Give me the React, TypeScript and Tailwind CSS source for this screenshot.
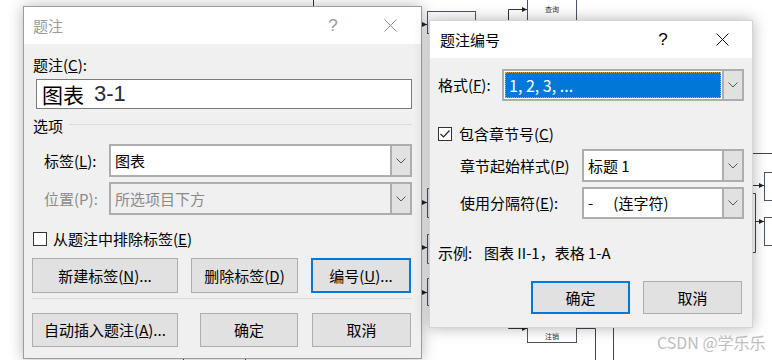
import React from "react";

function Chevron() {
  return (
    <svg width="10" height="6" viewBox="0 0 10 6" className="block">
      <polyline points="0.5,0.5 5,5 9.5,0.5" fill="none" stroke="#555" strokeWidth="1" />
    </svg>
  );
}

function CloseX({ color }: { color: string }) {
  return (
    <svg width="13" height="13" viewBox="0 0 13 13" className="block">
      <line x1="0.5" y1="0.5" x2="12.5" y2="12.5" stroke={color} strokeWidth="1" />
      <line x1="12.5" y1="0.5" x2="0.5" y2="12.5" stroke={color} strokeWidth="1" />
    </svg>
  );
}

function Select({
  children,
  disabled,
  className,
}: {
  children: React.ReactNode;
  disabled?: boolean;
  className: string;
}) {
  return (
    <div
      className={`flex border-2 border-[#adadad] ${disabled ? "bg-[#f0f0f0] text-[#8a8a8a]" : "bg-white"} ${className}`}
    >
      <div className="flex-1 flex items-center pl-[4px] whitespace-pre">{children}</div>
      <div className="w-[20px] flex items-center justify-center bg-[#e1e1e1] border-l-2 border-[#adadad]">
        <Chevron />
      </div>
    </div>
  );
}

function Btn({
  children,
  className,
  primary,
}: {
  children: React.ReactNode;
  className: string;
  primary?: boolean;
}) {
  return (
    <div
      className={`flex items-center justify-center bg-[#e1e1e1] ${primary ? "border-2 border-[#0078d7]" : "border border-[#adadad]"} ${className}`}
    >
      {children}
    </div>
  );
}

function Background() {
  const s = "#4d5366";
  return (
    <svg className="absolute inset-0" width="772" height="360" viewBox="0 0 772 360">
      <defs>
        <marker id="ah" markerWidth="6" markerHeight="6" refX="5" refY="3" orient="auto">
          <path d="M0,0.5 L5,3 L0,5.5 Z" fill="#222" />
        </marker>
      </defs>
      <line x1="313.5" y1="0" x2="313.5" y2="8" stroke="#333" />
      <rect x="427.5" y="11.5" width="48" height="22" fill="none" stroke={s} />
      <line x1="420" y1="24.5" x2="427" y2="24.5" stroke="#333" markerEnd="url(#ah)" />
      <polyline points="508.5,22 508.5,9.5 527,9.5" fill="none" stroke="#333" markerEnd="url(#ah)" />
      <rect x="527.5" y="-1" width="49" height="22" fill="white" stroke={s} />
      <text x="552" y="12" fontSize="7" textAnchor="middle" fill="#333" fontFamily="Noto Sans CJK SC, sans-serif">查询</text>
      <line x1="752" y1="153.5" x2="772" y2="153.5" stroke="#444" />
      <rect x="764.5" y="172.5" width="20" height="28" fill="none" stroke={s} />
      <rect x="764.5" y="217.5" width="20" height="28" fill="none" stroke={s} />
      <line x1="752" y1="185.5" x2="764" y2="185.5" stroke="#333" markerEnd="url(#ah)" />
      <path d="M752 193.5 H755.5 V252.5 H752" fill="none" stroke="#444" />
      <line x1="755" y1="221.5" x2="764" y2="221.5" stroke="#333" markerEnd="url(#ah)" />
      <line x1="420" y1="202.5" x2="427" y2="202.5" stroke="#333" markerEnd="url(#ah)" />
      <line x1="420" y1="247.5" x2="427" y2="247.5" stroke="#333" markerEnd="url(#ah)" />
      <line x1="420" y1="292.5" x2="427" y2="292.5" stroke="#333" markerEnd="url(#ah)" />
      <path d="M431 188.5 H427.5 V217.5 H431" fill="none" stroke={s} />
      <path d="M431 234.5 H427.5 V263.5 H431" fill="none" stroke={s} />
      <path d="M431 278.5 H427.5 V305.5 H431" fill="none" stroke={s} />
      <polyline points="508.5,320 508.5,328.5 527,328.5" fill="none" stroke="#333" markerEnd="url(#ah)" />
      <rect x="527.5" y="318.5" width="49" height="24" fill="white" stroke={s} />
      <text x="552" y="339" fontSize="7" textAnchor="middle" fill="#333" fontFamily="Noto Sans CJK SC, sans-serif">注销</text>
      <polyline points="576,328.5 595.5,328.5 595.5,360" fill="none" stroke="#444" />
      <line x1="613.5" y1="320" x2="613.5" y2="360" stroke="#444" />
      <line x1="183.5" y1="350" x2="183.5" y2="360" stroke="#444" />
      <line x1="245.5" y1="350" x2="245.5" y2="360" stroke="#444" />
    </svg>
  );
}

function LeftDialog() {
  return (
    <div className="absolute left-[23px] top-[6px] w-[399px] h-[353px] border border-[#9c9c9c] bg-[#f0f0f0] shadow-[0_0_14px_rgba(0,0,0,0.28)] flex flex-col">
      <div className="h-[37px] bg-white flex items-center pl-[9px] pr-[21px] text-[#9a9a9a]">
        <span className="text-[15px] leading-[20px]">题注</span>
        <span className="flex-1" />
        <span className="w-[20px] text-center text-[17px] leading-[20px] font-['Liberation_Sans',sans-serif]">?</span>
        <span className="w-[20px] ml-[37px] flex justify-center">
          <CloseX color="#8a8a8a" />
        </span>
      </div>
      <div className="flex flex-col pl-[9px] pr-[9px] leading-[20px]">
        <div className="mt-[11px] h-[20px]">
          题注(<u>C</u>):
        </div>
        <div className="mt-[4px] ml-[3px] h-[30px] border border-[#7a7a7a] bg-white flex items-center pl-[5px] text-[21px]">
          <span>图表</span>
          <span className="ml-[10px] text-[#2a2a3a] font-['Liberation_Sans',sans-serif] text-[22px]">3-1</span>
        </div>
        <div className="mt-[7px] h-[20px] flex items-center">
          <span>选项</span>
          <span className="ml-[6px] flex-1 h-px bg-[#dadada] mt-[-4px]" />
        </div>
        <div className="mt-[8px] flex items-center">
          <span className="ml-[11px] w-[65px]">
            标签(<u>L</u>):
          </span>
          <Select className="flex-1 h-[33px]">图表</Select>
        </div>
        <div className="mt-[5px] flex items-center">
          <span className="ml-[11px] w-[65px] text-[#8a8a8a]">位置(P):</span>
          <Select disabled className="flex-1 h-[33px]">
            所选项目下方
          </Select>
        </div>
        <div className="mt-[14px] h-[20px] flex items-center">
          <span className="w-[14px] h-[14px] border border-[#333] bg-white" />
          <span className="ml-[6px]">
            从题注中排除标签(<u>E</u>)
          </span>
        </div>
        <div className="mt-[9px] ml-[-1px] flex gap-[13px]">
          <Btn className="w-[146px] h-[35px]">
            新建标签(<u>N</u>)...
          </Btn>
          <Btn className="w-[107px] h-[35px]">
            删除标签(<u>D</u>)
          </Btn>
          <Btn primary className="w-[100px] h-[35px]">
            编号(<u>U</u>)...
          </Btn>
        </div>
        <div className="mt-[5px] ml-[-1px] h-px bg-[#dadada]" />
        <div className="mt-[14px] ml-[-1px] flex">
          <Btn className="w-[146px] h-[34px]">
            自动插入题注(<u>A</u>)...
          </Btn>
          <Btn className="ml-[22px] w-[98px] h-[34px]">确定</Btn>
          <Btn className="ml-[14px] w-[99px] h-[34px]">取消</Btn>
        </div>
      </div>
    </div>
  );
}

function RightDialog() {
  return (
    <div className="absolute left-[429px] top-[20px] w-[324px] h-[308px] border border-[#d4d4d4] bg-[#f0f0f0] shadow-[0_0_14px_rgba(0,0,0,0.3)] flex flex-col">
      <div className="h-[37px] bg-white flex items-center pl-[10px] pr-[20px] text-black">
        <span className="text-[15px] leading-[20px]">题注编号</span>
        <span className="flex-1" />
        <span className="w-[20px] text-center text-[17px] leading-[20px] font-['Liberation_Sans',sans-serif]">?</span>
        <span className="w-[20px] ml-[39px] flex justify-center">
          <CloseX color="#111" />
        </span>
      </div>
      <div className="flex flex-col pl-[8px] pr-[8px] leading-[20px]">
        <div className="mt-[11px] flex items-center">
          <span className="w-[64px]">
            格式(<u>F</u>):
          </span>
          <div className="flex-1 h-[32px] flex border-2 border-[#adadad] bg-white">
            <div className="flex-1 m-[1px] border border-dotted border-[#e0a040] bg-[#0078d7] text-white flex items-center pl-[3px] text-[16px]">
              1, 2, 3, ...
            </div>
            <div className="w-[20px] flex items-center justify-center bg-[#e1e1e1] border-l-2 border-[#adadad]">
              <Chevron />
            </div>
          </div>
        </div>
        <div className="mt-[23px] h-[20px] flex items-center">
          <span className="w-[14px] h-[14px] border border-[#333] bg-white flex items-center justify-center">
            <svg width="10" height="8" viewBox="0 0 10 8">
              <polyline points="0.5,4 3.5,7 9.5,0.5" fill="none" stroke="#222" strokeWidth="1.2" />
            </svg>
          </span>
          <span className="ml-[7px]">
            包含章节号(<u>C</u>)
          </span>
        </div>
        <div className="mt-[5px] flex items-center">
          <span className="ml-[22px] w-[122px]">
            章节起始样式(<u>P</u>)
          </span>
          <Select className="flex-1 h-[33px]">标题 1</Select>
        </div>
        <div className="mt-[5px] flex items-center">
          <span className="ml-[22px] w-[122px]">
            使用分隔符(<u>E</u>):
          </span>
          <Select className="flex-1 h-[32px]">{"-      (连字符)"}</Select>
        </div>
        <div className="mt-[24px] h-[20px] flex items-center">
          <span className="w-[46px]">示例:</span>
          <span>图表 II-1，表格 1-A</span>
        </div>
        <div className="mt-[18px] flex justify-end gap-[13px] pr-[2px]">
          <Btn primary className="w-[99px] h-[33px]">
            确定
          </Btn>
          <Btn className="w-[99px] h-[33px]">取消</Btn>
        </div>
      </div>
    </div>
  );
}

export default function App() {
  return (
    <div className="relative w-[772px] h-[360px] overflow-hidden bg-white font-['Noto_Sans_CJK_SC',sans-serif] text-[15px] text-black">
      <Background />
      <LeftDialog />
      <RightDialog />
      <div className="absolute left-[657px] top-[332px] text-[16px] leading-[20px] text-[#bdbdbd]">CSDN @学乐乐</div>
    </div>
  );
}
